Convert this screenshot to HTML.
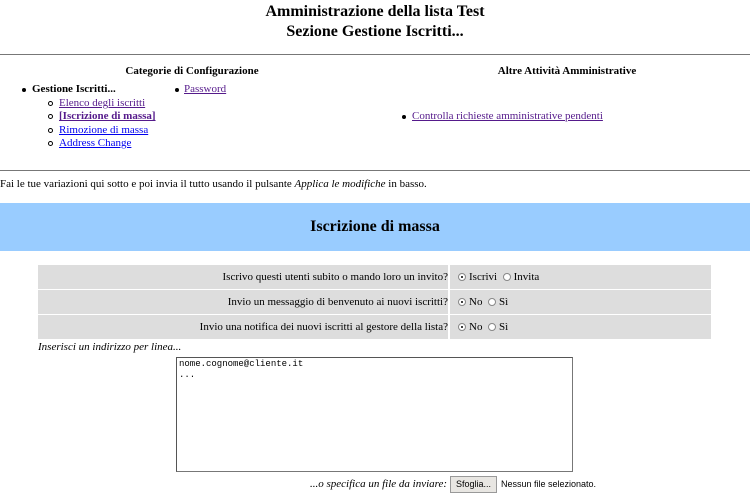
<!DOCTYPE html>
<html><head><meta charset="utf-8"><style>
*{margin:0;padding:0;box-sizing:border-box}
body{width:750px;height:500px;overflow:hidden;background:#fff;font-family:"Liberation Serif",serif;font-size:11px;color:#000;position:relative}
#w{position:absolute;left:0;top:1px;width:750px;height:500px}
.a{position:absolute;white-space:nowrap}
.v{color:#551a8b;text-decoration:underline}
.u{color:#0000ee;text-decoration:underline}
h1{position:absolute;left:0;width:750px;text-align:center;font-size:16px;font-weight:bold}
hr{position:absolute;left:0;width:750px;border:0;border-top:1px solid #777;height:0}
.dot{position:absolute;width:4px;height:4px;border-radius:50%;background:#000}
.circ{position:absolute;width:5px;height:5px;border-radius:50%;border:1px solid #000}
.row{position:absolute;left:38px;width:673px;height:24px;background:#ddd}
.lbl{position:absolute;right:263px;top:6px;white-space:nowrap}
.sep{position:absolute;left:410px;top:0;width:2px;height:24px;background:#fff}
.opt{position:absolute;left:420px;top:6px;white-space:nowrap}
.r{display:inline-block;width:8px;height:8px;border:1px solid #888;border-radius:50%;background:#fff;vertical-align:-1px;margin-right:3px;position:relative}
.r.on::after{content:"";position:absolute;left:2px;top:2px;width:2px;height:2px;background:#000;border-radius:50%}
</style></head><body><div id="w">
<h1 style="top:2px">Amministrazione della lista Test</h1>
<h1 style="top:22px">Sezione Gestione Iscritti...</h1>
<hr style="top:53px">
<div class="a" style="left:0;width:384px;text-align:center;top:64px;font-weight:bold">Categorie di Configurazione</div>
<div class="a" style="left:384px;width:366px;text-align:center;top:64px;font-weight:bold">Altre Attività Amministrative</div>
<div class="dot" style="left:22px;top:87px"></div>
<div class="a" style="left:32px;top:82px;font-weight:bold">Gestione Iscritti...</div>
<div class="dot" style="left:175px;top:87px"></div>
<div class="a v" style="left:184px;top:82px">Password</div>
<div class="circ" style="left:48px;top:100px"></div>
<div class="a v" style="left:59px;top:96px">Elenco degli iscritti</div>
<div class="circ" style="left:48px;top:113px"></div>
<div class="a v" style="left:59px;top:109px;font-weight:bold">[Iscrizione di massa]</div>
<div class="circ" style="left:48px;top:127px"></div>
<div class="a u" style="left:59px;top:123px">Rimozione di massa</div>
<div class="circ" style="left:48px;top:140px"></div>
<div class="a u" style="left:59px;top:136px">Address Change</div>
<div class="dot" style="left:402px;top:114px"></div>
<div class="a v" style="left:412px;top:109px">Controlla richieste amministrative pendenti</div>
<hr style="top:169px">
<div class="a" style="left:0;top:177px">Fai le tue variazioni qui sotto e poi invia il tutto usando il pulsante <i>Applica le modifiche</i> in basso.</div>
<div class="a" style="left:0;top:202px;width:750px;height:48px;background:#99ccff;text-align:center;font-size:16px;font-weight:bold;line-height:48px">Iscrizione di massa</div>
<div class="row" style="top:264px"><div class="lbl">Iscrivo questi utenti subito o mando loro un invito?</div><div class="sep"></div><div class="opt"><span class="r on"></span>Iscrivi &nbsp;<span class="r"></span>Invita</div></div>
<div class="row" style="top:289px"><div class="lbl">Invio un messaggio di benvenuto ai nuovi iscritti?</div><div class="sep"></div><div class="opt"><span class="r on"></span>No &nbsp;<span class="r"></span>Sì</div></div>
<div class="row" style="top:314px"><div class="lbl">Invio una notifica dei nuovi iscritti al gestore della lista?</div><div class="sep"></div><div class="opt"><span class="r on"></span>No &nbsp;<span class="r"></span>Sì</div></div>
<div class="a" style="left:38px;top:340px;font-style:italic">Inserisci un indirizzo per linea...</div>
<div class="a" style="left:176px;top:356px;width:397px;height:115px;border:1px solid #777;border-top-color:#555;border-left-color:#555;background:#fff;font-family:'Liberation Mono',monospace;font-size:9px;padding:1px 2px;line-height:11px">nome.cognome@cliente.it<br>...</div>
<div class="a" style="left:310px;top:477px;font-style:italic">...o specifica un file da inviare:</div>
<div class="a" style="left:450px;top:475px;width:47px;height:17px;border:1px solid #999;background:#e8e6e2;font-family:'Liberation Sans',sans-serif;font-size:9px;text-align:center;line-height:15px">Sfoglia...</div>
<div class="a" style="left:501px;top:478px;font-family:'Liberation Sans',sans-serif;font-size:9px">Nessun file selezionato.</div>
</div></body></html>
